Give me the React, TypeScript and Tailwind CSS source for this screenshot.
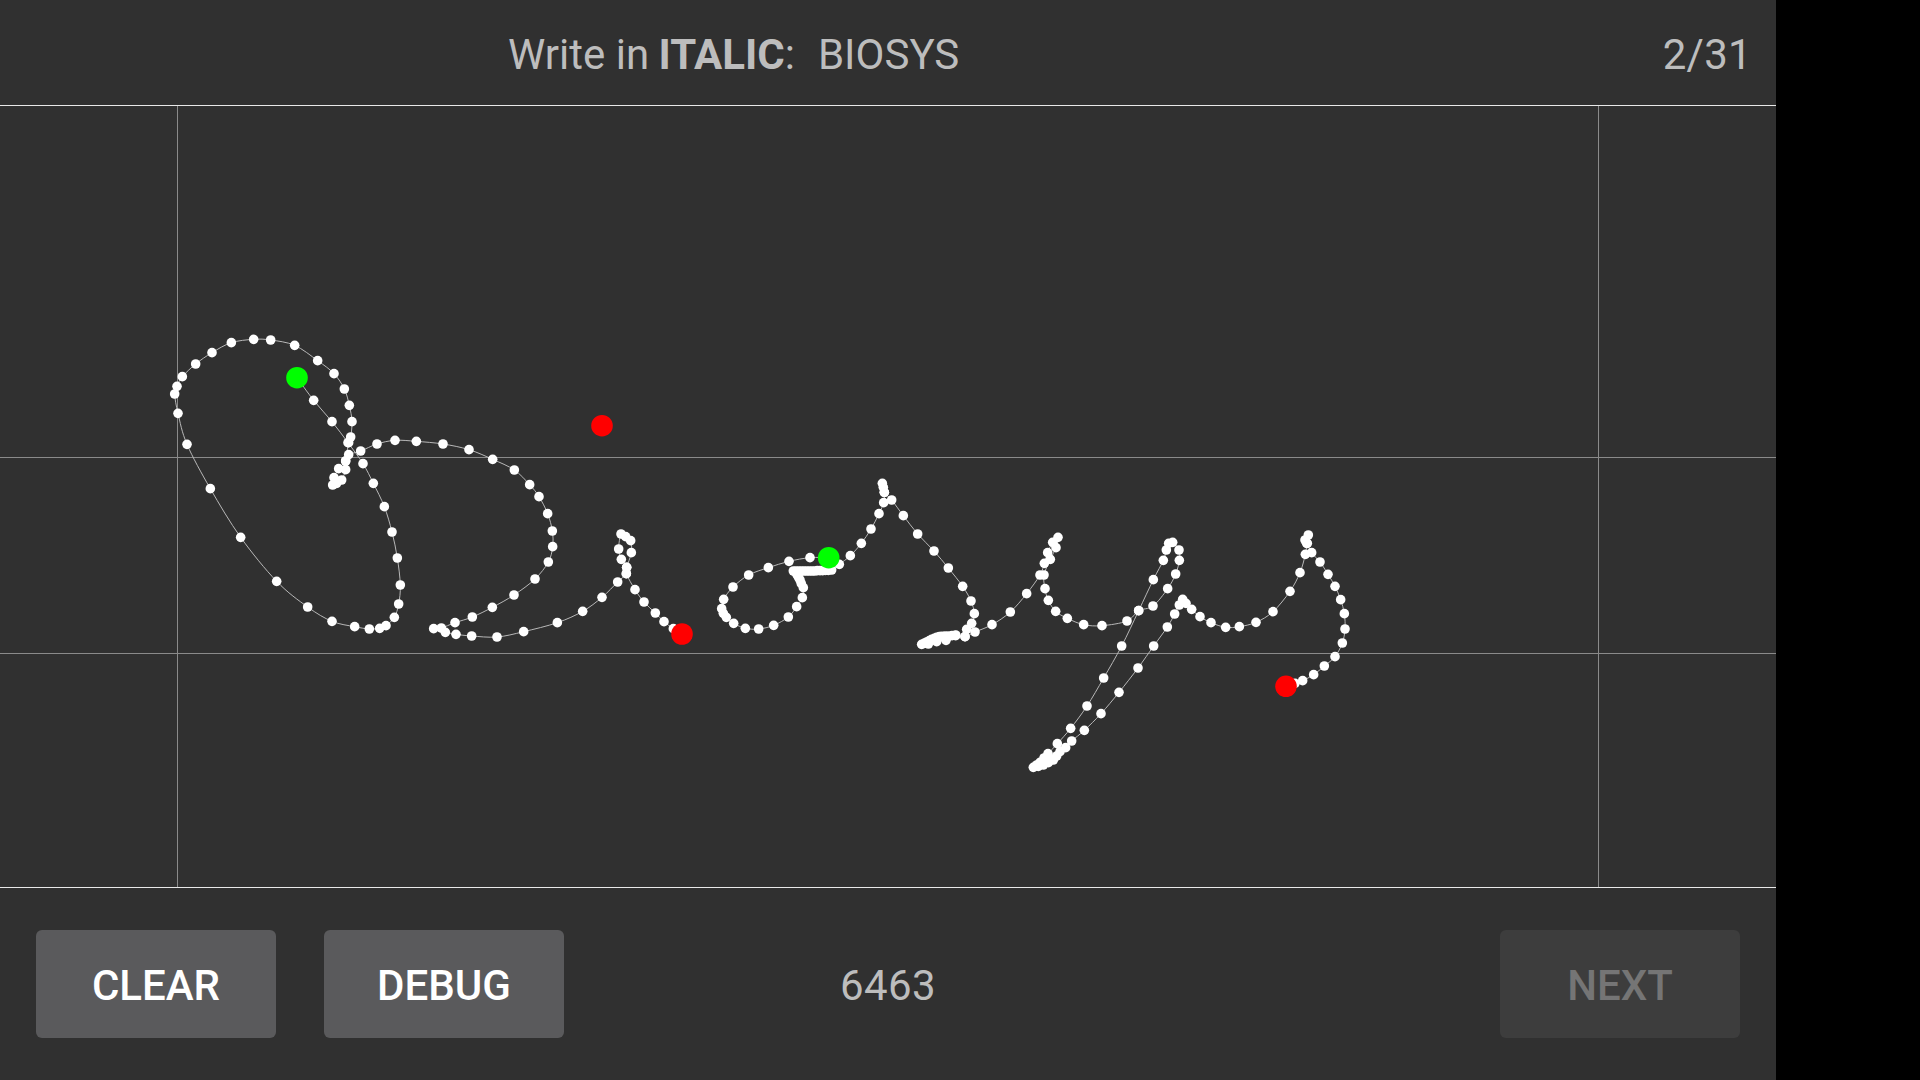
import React from 'react';

type Pt = [number, number];

// points were read off 3x crops, so each run has its own crop origin
const crop = (ox: number, oy: number, pts: Pt[]): Pt[] => pts.map(([x, y]) => [ox + x / 3, oy + y / 3]);

const strokeOne: Pt[] = [
  ...crop(150, 320, [
    [441, 173], [491, 241], [546, 305], [594, 368], [639, 431], [670, 490], [703, 560], [726, 636], [742, 714],
    [751, 795], [746, 852], [733, 892], [708, 917], [689, 925], [658, 927], [614, 920], [546, 904], [473, 861],
    [380, 784], [272, 652], [181, 506], [111, 373], [84, 280], [74, 222], [81, 199], [97, 170], [137, 132],
    [186, 98], [244, 68], [311, 58], [362, 60], [434, 76], [503, 122], [552, 161], [583, 207], [598, 256],
    [606, 305], [602, 351], [596, 368], [587, 423], [587, 449], [575, 480], [560, 490], [548, 495], [552, 473],
    [566, 446], [587, 423], [596, 404], [632, 393], [681, 372], [735, 361], [799, 364],
  ]),
  ...crop(420, 400, [
    [69, 132], [147, 149], [218, 178], [283, 210], [329, 254], [357, 290], [383, 341], [397, 393], [398, 440],
    [385, 486], [345, 537], [282, 585], [217, 622], [157, 651], [105, 668], [64, 684], [41, 686], [76, 697],
    [108, 703], [155, 708], [231, 711], [311, 695], [412, 668], [488, 634], [546, 592], [593, 546], [619, 521],
    [620, 502], [604, 478], [596, 447], [603, 402], [617, 410], [632, 422], [634, 458], [620, 502], [619, 521],
    [645, 569], [672, 606], [706, 639], [732, 665], [760, 686], [786, 702],
  ]),
];

const strokeTwo: Pt[] = [
  ...crop(700, 460, [
    [386, 293], [330, 293], [267, 304], [205, 323], [146, 345], [99, 381], [71, 418], [65, 446], [70, 460],
    [79, 472], [101, 490], [136, 505], [176, 507], [221, 496], [265, 471], [290, 440], [307, 413], [310, 383],
    [304, 371], [300, 360], [295, 351], [290, 342], [280, 333], [288, 333], [296, 333], [304, 333], [312, 333],
    [320, 333], [328, 333], [336, 333], [344, 333], [352, 332], [360, 332], [368, 332], [376, 331], [385, 331],
    [395, 330], [418, 313], [451, 287], [484, 250], [513, 207], [537, 161], [551, 128], [553, 97], [550, 82],
    [547, 70], [553, 97], [575, 120], [610, 167], [653, 222], [702, 273], [745, 324], [788, 379], [813, 423],
    [823, 461], [815, 490], [800, 508], [795, 530], [767, 527], [738, 541], [710, 545], [685, 552], [665, 553],
    [672, 550], [680, 546], [688, 542], [695, 538], [703, 535], [710, 532], [718, 530], [725, 529], [735, 528],
    [745, 528], [756, 527], [767, 525], [795, 530], [825, 516], [876, 494], [931, 456],
  ]),
  ...crop(900, 510, [
    [380, 251], [420, 195], [433, 160], [443, 128], [458, 97], [474, 82], [468, 113], [451, 148], [432, 195],
    [435, 236], [445, 271], [467, 304], [502, 325], [551, 344], [606, 347], [681, 333], [716, 302], [759, 288],
    [803, 236], [827, 192], [838, 151], [837, 120], [818, 97], [806, 100], [799, 120], [790, 151], [760, 209],
    [716, 302], [665, 408], [611, 504], [561, 588], [512, 655], [472, 701], [444, 731], [432, 744], [420, 757],
    [410, 765], [400, 772], [415, 769], [430, 765], [445, 758], [460, 750], [470, 738], [480, 725], [497, 713],
    [515, 693], [553, 661], [603, 611], [657, 547], [714, 474], [761, 408], [802, 351], [824, 312], [838, 285],
    [848, 268], [858, 280],
  ]),
  ...crop(1020, 510, [
    [515, 298], [540, 320], [573, 338], [617, 352], [658, 350], [708, 337], [759, 305], [810, 244], [840, 188],
    [856, 133], [860, 100], [855, 90], [865, 75], [862, 100], [875, 128], [900, 156], [924, 193], [945, 229],
    [962, 269], [973, 311], [975, 357], [967, 399], [945, 440], [913, 468], [881, 494], [848, 512], [825, 520],
    [798, 529],
  ]),
];

// smooth line through the samples (catmull-rom)
const toPath = (pts: Pt[]) => {
  let d = `M${pts[0][0]} ${pts[0][1]}`;
  for (let i = 0; i < pts.length - 1; i++) {
    const p0 = pts[Math.max(i - 1, 0)];
    const p1 = pts[i];
    const p2 = pts[i + 1];
    const p3 = pts[Math.min(i + 2, pts.length - 1)];
    d += `C${p1[0] + (p2[0] - p0[0]) / 6} ${p1[1] + (p2[1] - p0[1]) / 6} ${p2[0] - (p3[0] - p1[0]) / 6} ${p2[1] - (p3[1] - p1[1]) / 6} ${p2[0]} ${p2[1]}`;
  }
  return d;
};

const Stroke = ({ pts }: { pts: Pt[] }) => (
  <>
    <path d={toPath(pts)} fill="none" stroke="#b8b8b8" strokeWidth={1} />
    {pts.map(([x, y], i) => (
      <circle key={i} cx={x} cy={y} r={4.8} fill="#ffffff" />
    ))}
  </>
);

const Dot = ({ pt, color }: { pt: Pt; color: string }) => <circle cx={pt[0]} cy={pt[1]} r={10.8} fill={color} />;

const Canvas = () => (
  <div className="flex-1 min-h-0">
    {/* viewBox uses page coordinates so the samples stay readable */}
    <svg className="block w-full h-full" viewBox="0 106 1776 781">
      <g stroke="#8a8a8a" strokeWidth={1}>
        <line x1={177.5} y1={106} x2={177.5} y2={887} />
        <line x1={1598.5} y1={106} x2={1598.5} y2={887} />
        <line x1={0} y1={457.5} x2={1776} y2={457.5} />
        <line x1={0} y1={653.5} x2={1776} y2={653.5} />
      </g>
      <Stroke pts={strokeOne} />
      <Stroke pts={strokeTwo} />
      <Dot pt={[297, 377.7]} color="#00ff00" />
      <Dot pt={[602, 425.7]} color="#ff0000" />
      <Dot pt={[682, 634]} color="#ff0000" />
      <Dot pt={[828.7, 557.7]} color="#00ff00" />
      <Dot pt={[1286, 686.3]} color="#ff0000" />
    </svg>
  </div>
);

export default function App() {
  return (
    <div className="h-screen bg-black font-['Roboto',sans-serif]">
      <div className="w-[1776px] h-full bg-[#303030] flex flex-col">
        {/* Header */}
        <header className="h-[106px] shrink-0 border-b border-[#e8e8e8] flex items-center justify-between pl-[508px] pr-[24px] pt-[4px] text-[42px] text-[#bdbdbd]">
          <div>
            Write in <b className="font-bold ml-[-1px]">ITALIC</b>:<span className="ml-[23px]">BIOSYS</span>
          </div>
          <div className="tracking-[0.3px]">2/31</div>
        </header>

        <Canvas />

        {/* Footer */}
        <footer className="h-[193px] shrink-0 border-t border-[#e8e8e8] grid grid-cols-3 items-center px-[36px]">
          <div className="flex gap-[48px]">
            <button className="w-[240px] h-[108px] pt-[2px] rounded-md bg-[#5a5a5c] text-white text-[42px] font-medium">CLEAR</button>
            <button className="w-[240px] h-[108px] pt-[2px] rounded-md bg-[#5a5a5c] text-white text-[42px] font-medium">DEBUG</button>
          </div>
          <div className="pt-[2px] text-center text-[42px] tracking-[0.4px] text-[#bdbdbd]">6463</div>
          <div className="flex justify-end">
            <button disabled className="w-[240px] h-[108px] pt-[2px] rounded-md bg-[#3d3d3d] text-[#757575] text-[42px] font-medium">NEXT</button>
          </div>
        </footer>
      </div>
    </div>
  );
}
